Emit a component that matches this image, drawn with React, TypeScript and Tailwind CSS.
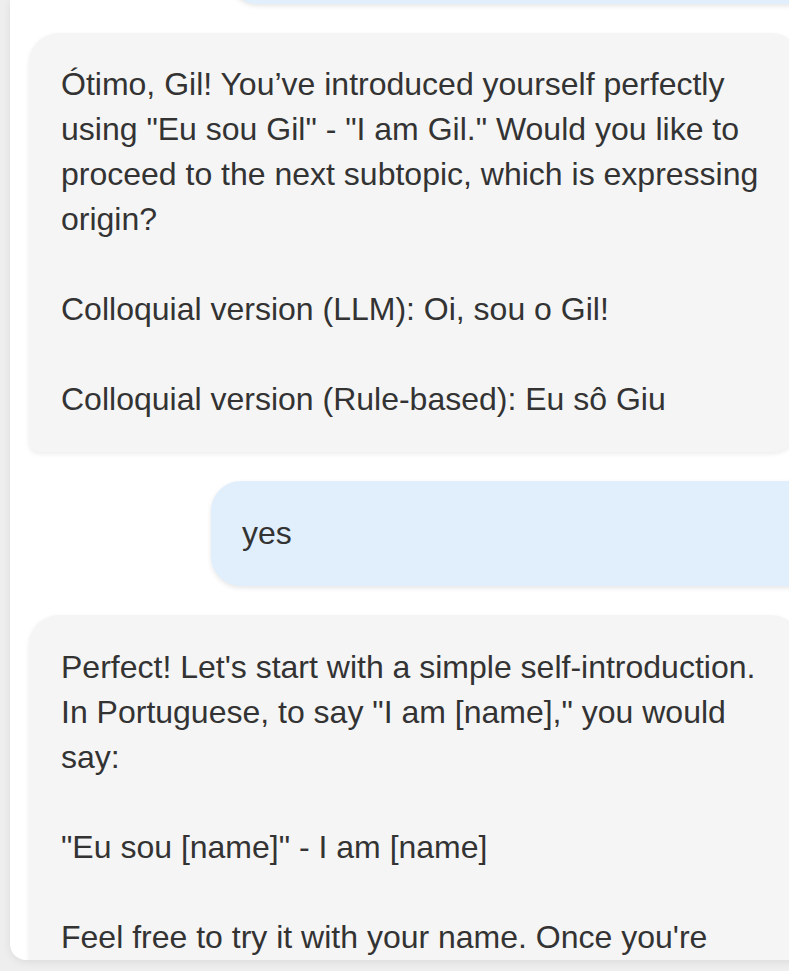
import React from "react";

const font = { fontFamily: '"Liberation Sans", Arial, sans-serif' };

export default function App() {
  return (
    <div
      className="w-[789px] h-[971px] bg-[#eeeeee] overflow-hidden"
      style={font}
    >
      <div className="ml-[10px] w-[900px] h-[960px] bg-white rounded-bl-[16px] overflow-hidden shadow-[0_2px_8px_rgba(0,0,0,0.08)]">
        <div className="flex flex-col gap-[29px] pl-[19px] mt-[-101px] text-[32px] leading-[45px] text-[#333333]">
          <div className="self-start ml-[199px] w-[700px] h-[105px] bg-[#e1effd] rounded-[30px] shadow-[0_2px_5px_rgba(0,0,0,0.1)]" />
          <div className="w-[772px] shrink-0 bg-[#f5f5f5] rounded-[30px] rounded-bl-[10px] pl-[32px] pr-[30px] pt-[29px] pb-[30px] whitespace-pre-wrap shadow-[0_2px_5px_rgba(0,0,0,0.08)]">
            {"Ótimo, Gil! You’ve introduced yourself perfectly using \"Eu sou Gil\" - \"I am Gil.\" Would you like to proceed to the next subtopic, which is expressing origin?\n\nColloquial version (LLM): Oi, sou o Gil!\n\nColloquial version (Rule-based): Eu sô Giu"}
          </div>
          <div className="ml-[182px] w-[700px] bg-[#e1effd] rounded-[30px] px-[31px] py-[30px] shadow-[0_2px_5px_rgba(0,0,0,0.1)]">
            yes
          </div>
          <div className="w-[772px] shrink-0 bg-[#f5f5f5] rounded-[30px] rounded-bl-[10px] pl-[32px] pr-[30px] pt-[30px] pb-[30px] whitespace-pre-wrap shadow-[0_2px_5px_rgba(0,0,0,0.08)]">
            {"Perfect! Let's start with a simple self-introduction. In Portuguese, to say \"I am [name],\" you would say:\n\n\"Eu sou [name]\" - I am [name]\n\nFeel free to try it with your name. Once you're"}
          </div>
        </div>
      </div>
    </div>
  );
}
